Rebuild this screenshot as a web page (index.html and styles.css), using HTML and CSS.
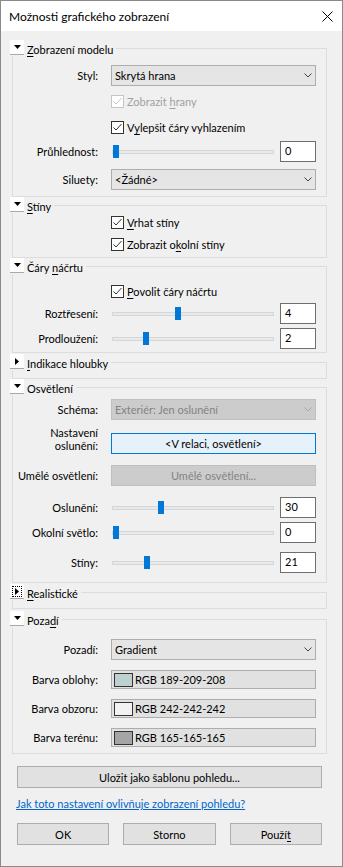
FILE: index.html
```html
<!DOCTYPE html>
<html lang="cs">
<head>
<meta charset="utf-8">
<title>Možnosti grafického zobrazení</title>
<link rel="stylesheet" href="styles.css">
</head>
<body>
<div class="window">
  <div class="titlebar">
    <span class="title">Možnosti grafického zobrazení</span>
    <svg class="close" width="11" height="11" viewBox="0 0 11 11"><path d="M0.5 0.5 L10.5 10.5 M10.5 0.5 L0.5 10.5" stroke="#000" stroke-width="1" fill="none"/></svg>
  </div>
  <div class="content">

    <fieldset class="group pb6">
      <legend><span class="toggle"><svg class="tri" width="7" height="4" viewBox="0 0 7 4"><path d="M0 0 H7 L3.5 4 Z" fill="#000"/></svg></span><span class="gtitle"><u>Z</u>obrazení modelu</span></legend>
      <div class="row mt9">
        <span class="lbl">Styl:</span>
        <div class="select"><span>Skrytá hrana</span><svg class="chev" width="8" height="5" viewBox="0 0 8 5"><path d="M0.5 0.5 L4 4 L7.5 0.5" stroke="#444" fill="none"/></svg></div>
      </div>
      <div class="row mt9">
        <span></span>
        <div class="check disabled"><span class="cb"><svg width="11" height="11" viewBox="0 0 11 11"><path d="M1.5 5.5 L4 8 L9.5 2" stroke="currentColor" fill="none"/></svg></span><span>Zobrazit <u>h</u>rany</span></div>
      </div>
      <div class="row mt13">
        <span></span>
        <div class="check"><span class="cb"><svg width="11" height="11" viewBox="0 0 11 11"><path d="M1.5 5.5 L4 8 L9.5 2" stroke="currentColor" fill="none"/></svg></span><span>V<u>y</u>lepšit čáry vyhlazením</span></div>
      </div>
      <div class="row mt7">
        <span class="lbl">Průhlednost:</span>
        <div class="sliderrow"><div class="slider"><div class="track"></div><div class="thumb" style="left:2px"></div></div><div class="num">0</div></div>
      </div>
      <div class="row mt7">
        <span class="lbl">Siluety:</span>
        <div class="select"><span>&lt;Žádné&gt;</span><svg class="chev" width="8" height="5" viewBox="0 0 8 5"><path d="M0.5 0.5 L4 4 L7.5 0.5" stroke="#444" fill="none"/></svg></div>
      </div>
    </fieldset>

    <fieldset class="group pb6">
      <legend><span class="toggle"><svg class="tri" width="7" height="4" viewBox="0 0 7 4"><path d="M0 0 H7 L3.5 4 Z" fill="#000"/></svg></span><span class="gtitle"><u>S</u>tíny</span></legend>
      <div class="row mt3">
        <span></span>
        <div class="check"><span class="cb"><svg width="11" height="11" viewBox="0 0 11 11"><path d="M1.5 5.5 L4 8 L9.5 2" stroke="currentColor" fill="none"/></svg></span><span><u>V</u>rhat stíny</span></div>
      </div>
      <div class="row mt9">
        <span></span>
        <div class="check"><span class="cb"><svg width="11" height="11" viewBox="0 0 11 11"><path d="M1.5 5.5 L4 8 L9.5 2" stroke="currentColor" fill="none"/></svg></span><span>Zobrazit o<u>k</u>olní stíny</span></div>
      </div>
    </fieldset>

    <fieldset class="group pb3">
      <legend><span class="toggle"><svg class="tri" width="7" height="4" viewBox="0 0 7 4"><path d="M0 0 H7 L3.5 4 Z" fill="#000"/></svg></span><span class="gtitle">Čáry <u>n</u>áčrtu</span></legend>
      <div class="row mt11">
        <span></span>
        <div class="check"><span class="cb"><svg width="11" height="11" viewBox="0 0 11 11"><path d="M1.5 5.5 L4 8 L9.5 2" stroke="currentColor" fill="none"/></svg></span><span><u>P</u>ovolit čáry náčrtu</span></div>
      </div>
      <div class="row mt5">
        <span class="lbl">Roztřesení:</span>
        <div class="sliderrow"><div class="slider"><div class="track"></div><div class="thumb" style="left:64px"></div></div><div class="num">4</div></div>
      </div>
      <div class="row mt4">
        <span class="lbl">Prodloužení:</span>
        <div class="sliderrow"><div class="slider"><div class="track"></div><div class="thumb" style="left:32px"></div></div><div class="num">2</div></div>
      </div>
    </fieldset>

    <fieldset class="group collapsed gm1">
      <legend><span class="toggle"><svg class="tri" width="4" height="7" viewBox="0 0 4 7"><path d="M0 0 V7 L4 3.5 Z" fill="#000"/></svg></span><span class="gtitle"><u>I</u>ndikace hloubky</span></legend>
    </fieldset>

    <fieldset class="group pb9">
      <legend><span class="toggle"><svg class="tri" width="7" height="4" viewBox="0 0 7 4"><path d="M0 0 H7 L3.5 4 Z" fill="#000"/></svg></span><span class="gtitle">Osvětlení</span></legend>
      <div class="row mt4">
        <span class="lbl">Schéma:</span>
        <div class="select disabled"><span>Exteriér: Jen oslunění</span><svg class="chev" width="8" height="5" viewBox="0 0 8 5"><path d="M0.5 0.5 L4 4 L7.5 0.5" stroke="#a6a6a6" fill="none"/></svg></div>
      </div>
      <div class="row top mt6">
        <span class="lbl two">Nastavení<br>oslunění:</span>
        <div class="btn focus mt7">&lt;V relaci, osvětlení&gt;</div>
      </div>
      <div class="row mt11">
        <span class="lbl">Umělé osvětlení:</span>
        <div class="btn disabled">Umělé osvětlení...</div>
      </div>
      <div class="row mt11">
        <span class="lbl">Oslunění:</span>
        <div class="sliderrow"><div class="slider"><div class="track"></div><div class="thumb" style="left:47px"></div></div><div class="num">30</div></div>
      </div>
      <div class="row mt4">
        <span class="lbl">Okolní světlo:</span>
        <div class="sliderrow"><div class="slider"><div class="track"></div><div class="thumb" style="left:2px"></div></div><div class="num">0</div></div>
      </div>
      <div class="row mt9">
        <span class="lbl">Stíny:</span>
        <div class="sliderrow"><div class="slider"><div class="track"></div><div class="thumb" style="left:33px"></div></div><div class="num">21</div></div>
      </div>
    </fieldset>

    <fieldset class="group collapsed gm1">
      <legend><span class="toggle"><span class="focusring"><svg class="tri" width="4" height="7" viewBox="0 0 4 7"><path d="M0 0 V7 L4 3.5 Z" fill="#000"/></svg></span></span><span class="gtitle"><u>R</u>ealistické</span></legend>
    </fieldset>

    <fieldset class="group pb6 gm2">
      <legend><span class="toggle"><svg class="tri" width="7" height="4" viewBox="0 0 7 4"><path d="M0 0 H7 L3.5 4 Z" fill="#000"/></svg></span><span class="gtitle">Poza<u>d</u>í</span></legend>
      <div class="row mt12">
        <span class="lbl">Pozadí:</span>
        <div class="select"><span>Gradient</span><svg class="chev" width="8" height="5" viewBox="0 0 8 5"><path d="M0.5 0.5 L4 4 L7.5 0.5" stroke="#444" fill="none"/></svg></div>
      </div>
      <div class="row mt10">
        <span class="lbl">Barva oblohy:</span>
        <div class="colorbtn"><span class="swatch" style="background:rgb(189,209,208)"></span><span>RGB 189-209-208</span></div>
      </div>
      <div class="row mt10">
        <span class="lbl">Barva obzoru:</span>
        <div class="colorbtn"><span class="swatch" style="background:rgb(242,242,242)"></span><span>RGB 242-242-242</span></div>
      </div>
      <div class="row mt10">
        <span class="lbl">Barva terénu:</span>
        <div class="colorbtn"><span class="swatch" style="background:rgb(165,165,165)"></span><span>RGB 165-165-165</span></div>
      </div>
    </fieldset>

    <div class="btn wide">Uložit jako šablonu pohledu...</div>
    <a class="help" href="#">Jak toto nastavení ovlivňuje zobrazení pohledu?</a>
    <div class="footer">
      <div class="btn">OK</div>
      <div class="btn">Storno</div>
      <div class="btn">Použí<u>t</u></div>
    </div>
  </div>
</div>
</body>
</html>
```
FILE: styles.css
```css
* { box-sizing: border-box; }
html, body { margin: 0; padding: 0; background: #f0f0f0; }
body {
  font-family: Lato, Roboto, "Liberation Sans", sans-serif;
  font-size: 11px;
  color: #000;
}
u { text-decoration: underline; text-underline-offset: 2px; }

.window {
  width: 343px;
  height: 867px;
  border: 1px solid #8a8a8a;
  background: #f0f0f0;
  display: flex;
  flex-direction: column;
}
.titlebar {
  height: 30px;
  background: #fff;
  display: flex;
  align-items: center;
  justify-content: space-between;
  padding: 0 9px 0 8px;
  flex: none;
}
.title { font-size: 12px; line-height: 16px; padding-top: 1px; }
.close { display: block; margin-top: 1px; }

.content {
  padding: 9px 0 0 11px;
  display: flex;
  flex-direction: column;
  align-items: flex-start;
}

.group {
  width: 315px;
  margin: 0;
  padding: 0 10px 0 0;
  border: 1px solid #dcdcdc;
  min-width: 0;
}
.group legend {
  margin-left: -3px;
  padding: 0 3px 0 0;
  height: 16px;
  line-height: 16px;
  white-space: nowrap;
}
.toggle {
  display: inline-flex;
  align-items: center;
  justify-content: center;
  width: 14px;
  height: 15px;
  background: #fff;
  border-bottom: 1px solid #a8a8a8;
  vertical-align: top;
}
.tri { display: block; }
.focusring {
  display: flex;
  align-items: center;
  justify-content: center;
  width: 10px;
  height: 11px;
  border: 1px dotted #000;
}
.gtitle {
  display: inline-block;
  height: 16px;
  margin-left: 3px;
  padding-top: 3px;
  line-height: 13px;
  vertical-align: top;
}

.collapsed { height: 25px; }
.gm1 { margin-top: 1px; }
.gm2 { margin-top: 2px; }
.pb3 { padding-bottom: 3px; }
.pb6 { padding-bottom: 6px; }
.pb9 { padding-bottom: 9px; }

.mt3 { margin-top: 3px; }
.mt4 { margin-top: 4px; }
.mt5 { margin-top: 5px; }
.mt6 { margin-top: 6px; }
.mt7 { margin-top: 7px; }
.mt9 { margin-top: 9px; }
.mt10 { margin-top: 10px; }
.mt11 { margin-top: 11px; }
.mt12 { margin-top: 12px; }
.mt13 { margin-top: 13px; }

.row {
  display: grid;
  grid-template-columns: 85px 205px;
  column-gap: 13px;
  align-items: center;
}
.row.top { align-items: start; }
.lbl { text-align: right; white-space: nowrap; line-height: 14px; }
.lbl.two { line-height: 13px; }

.select {
  height: 21px;
  border: 1px solid #adadad;
  background: #e5e5e5;
  display: flex;
  align-items: center;
  justify-content: space-between;
  padding: 0 3px 0 3px;
}
.select.disabled { background: #cccccc; border-color: #bfbfbf; color: #838383; }
.chev { display: block; }

.check {
  display: flex;
  align-items: center;
  height: 13px;
  line-height: 13px;
}
.cb {
  width: 13px;
  height: 13px;
  border: 1px solid #333;
  background: #fff;
  color: #333;
  display: flex;
  margin-right: 3px;
}
.cb svg { display: block; }
.check.disabled { color: #a0a0a0; }
.check.disabled .cb { border-color: #c6c6c6; color: #c6c6c6; }

.sliderrow {
  display: flex;
  align-items: center;
  gap: 6px;
  height: 21px;
}
.slider {
  position: relative;
  width: 163px;
  height: 21px;
  display: flex;
  align-items: center;
}
.track {
  margin-left: 1px;
  width: 162px;
  height: 4px;
  background: #e7eaea;
  border: 1px solid #d6d6d6;
}
.thumb {
  position: absolute;
  top: 4px;
  width: 6px;
  height: 13px;
  background: #0078d7;
}
.num {
  width: 36px;
  height: 21px;
  border: 1px solid #6e6e6e;
  background: #fff;
  padding: 0 0 0 4px;
  line-height: 18px;
}

.btn {
  height: 21px;
  border: 1px solid #adadad;
  background: #e1e1e1;
  display: flex;
  align-items: center;
  justify-content: center;
}
.btn.focus { background: #e5f1fb; border-color: #0078d7; }
.btn.disabled { background: #cccccc; border-color: #bfbfbf; color: #838383; }

.colorbtn {
  height: 19px;
  border: 1px solid #adadad;
  background: #e1e1e1;
  display: flex;
  align-items: center;
  padding-left: 2px;
}
.swatch {
  width: 19px;
  height: 14px;
  border: 1px solid #333;
  margin-right: 2px;
}

.btn.wide {
  width: 305px;
  height: 22px;
  margin: 12px 0 0 5px;
}
.help {
  margin: 9px 0 0 4px;
  line-height: 14px;
  color: #0066cc;
  text-decoration: underline;
}
.footer {
  margin: 12px 0 0 5px;
  width: 305px;
  display: flex;
  gap: 14px;
}
.footer .btn { flex: 1; height: 22px; }
```
